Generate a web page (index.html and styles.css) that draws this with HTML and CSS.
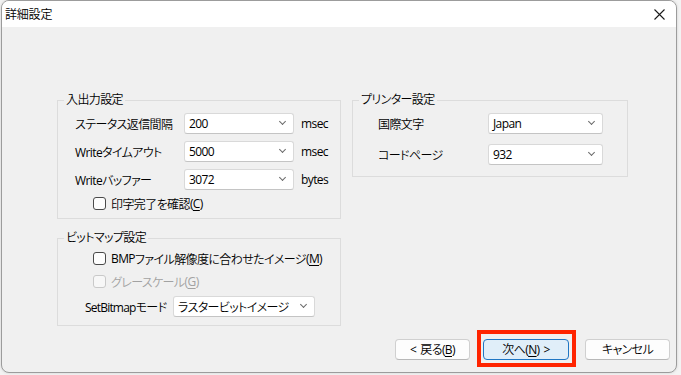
FILE: index.html
```html
<!DOCTYPE html>
<html lang="ja">
<head>
<meta charset="utf-8">
<title>詳細設定</title>
<link rel="stylesheet" href="styles.css">
</head>
<body>
<div class="window">
  <div class="titlebar">
    <span class="title">詳細設定</span>
    <span class="close" aria-label="閉じる">
      <svg width="11" height="11" viewBox="0 0 11 11"><path d="M0.5 0.5 L10.5 10.5 M10.5 0.5 L0.5 10.5" stroke="#1a1a1a" stroke-width="1.1" fill="none"/></svg>
    </span>
  </div>
  <div class="client">
    <div class="groups">
      <div class="col-left">
        <div class="group g-io">
          <span class="group-title">入出力設定</span>
          <div class="row">
            <span class="lbl w-io">ステータス返信間隔</span>
            <div class="combo w-110"><span class="en">200</span><i class="chev"></i></div>
            <span class="unit en">msec</span>
          </div>
          <div class="row">
            <span class="lbl w-io"><span class="en">Write</span>タイムアウト</span>
            <div class="combo w-110"><span class="en">5000</span><i class="chev"></i></div>
            <span class="unit en">msec</span>
          </div>
          <div class="row">
            <span class="lbl w-io"><span class="en">Write</span>バッファー</span>
            <div class="combo w-110"><span class="en">3072</span><i class="chev"></i></div>
            <span class="unit en">bytes</span>
          </div>
          <label class="check c-io"><span class="box"></span>印字完了を確認<span class="en">(<u>C</u>)</span></label>
        </div>
        <div class="group g-bmp">
          <span class="group-title">ビットマップ設定</span>
          <label class="check c-bmp"><span class="box"></span><span class="en">BMP</span>ファイル解像度に合わせたイメージ<span class="en">(<u>M</u>)</span></label>
          <label class="check c-bmp disabled"><span class="box"></span>グレースケール<span class="en">(<u>G</u>)</span></label>
          <div class="row r-bmp">
            <span class="lbl w-bmp"><span class="en tight">SetBitmap</span>モード</span>
            <div class="combo w-142"><span>ラスタービットイメージ</span><i class="chev"></i></div>
          </div>
        </div>
      </div>
      <div class="group g-printer">
        <span class="group-title">プリンター設定</span>
        <div class="row">
          <span class="lbl w-pr">国際文字</span>
          <div class="combo w-115"><span class="en">Japan</span><i class="chev"></i></div>
        </div>
        <div class="row">
          <span class="lbl w-pr">コードページ</span>
          <div class="combo w-115"><span class="en">932</span><i class="chev"></i></div>
        </div>
      </div>
    </div>
    <div class="buttons">
      <button class="btn b-back"><span class="en sp-r">&lt;</span>戻る<span class="en">(<u>B</u>)</span></button>
      <div class="hl-wrap">
        <button class="btn b-next default">次へ<span class="en">(<u>N</u>)</span><span class="en sp-l">&gt;</span></button>
        <span class="highlight"></span>
      </div>
      <button class="btn b-cancel">キャンセル</button>
    </div>
  </div>
</div>
</body>
</html>
```

FILE: styles.css
```css
* { box-sizing: border-box; }
html, body {
  margin: 0;
  padding: 0;
  background: #f3f3f3;
}
body {
  width: 681px;
  height: 375px;
  padding: 0 4px 1px 1px;
  font-family: "Open Sans", "Noto Sans CJK JP", sans-serif;
  font-size: 12px;
  font-weight: 350;
  font-feature-settings: "palt";
  letter-spacing: -0.6px;
  color: #000;
  overflow: hidden;
}
.en { font-weight: 400; }
.tight { letter-spacing: -0.8px; }
.sp-r { margin-right: 4px; }
.sp-l { margin-left: 4px; }
.window {
  width: 676px;
  height: 373px;
  border: 1px solid #9c9c9c;
  border-radius: 8px;
  overflow: hidden;
  display: flex;
  flex-direction: column;
  background: #f0f0f0;
  box-shadow: 0 0 3px rgba(0,0,0,0.15);
}
.titlebar {
  height: 26px;
  flex: none;
  background: #ffffff;
  display: flex;
  align-items: center;
  justify-content: space-between;
  padding: 0 6px 0 3px;
}
.title { font-size: 12px; letter-spacing: -0.2px; }
.close { display: flex; width: 11px; height: 11px; margin-right: 5px; }
.client {
  flex: 1;
  display: flex;
  flex-direction: column;
  padding: 73px 0 0 55px;
}
.groups {
  display: flex;
  gap: 11px;
  align-items: flex-start;
}
.col-left {
  display: flex;
  flex-direction: column;
  gap: 19px;
}
.group {
  position: relative;
  border: 1px solid #dcdcdc;
  display: flex;
  flex-direction: column;
}
.group-title {
  position: absolute;
  top: -10px;
  left: 6px;
  padding: 0 2px;
  background: #f0f0f0;
  line-height: 18px;
}
.g-io {
  width: 284px;
  height: 119px;
  padding: 12px 0 0 17px;
  gap: 7px;
}
.g-bmp {
  width: 284px;
  height: 88px;
  padding: 13px 0 0 0;
}
.g-printer {
  width: 276px;
  height: 77px;
  padding: 12px 0 0 25px;
  gap: 10px;
}
.row {
  display: flex;
  align-items: center;
  height: 21px;
}
.lbl { white-space: nowrap; }
.w-io { width: 109px; }
.w-pr { width: 110px; }
.w-bmp { width: 88px; }
.r-bmp { padding-left: 27px; }
.unit { margin-left: 7px; }
.combo {
  height: 21px;
  background: #fff;
  border: 1px solid #d9d9d9;
  border-bottom-color: #c4c4c4;
  border-radius: 3px;
  display: flex;
  align-items: center;
  justify-content: space-between;
  padding: 0 8px 0 4px;
  white-space: nowrap;
}
.w-110 { width: 110px; }
.w-115 { width: 115px; }
.w-142 { width: 142px; }
.chev {
  width: 5px;
  height: 5px;
  border-right: 1px solid #6a6a6a;
  border-bottom: 1px solid #6a6a6a;
  transform: rotate(45deg);
  margin-top: -4px;
}
.check {
  display: flex;
  align-items: center;
  height: 13px;
  white-space: nowrap;
}
.check .box {
  width: 13px;
  height: 13px;
  border: 1px solid #4a4a4a;
  border-radius: 3px;
  background: #fdfdfd;
  margin-right: 5px;
  flex: none;
}
.c-io { margin-left: 18px; }
.c-bmp { margin-left: 35px; margin-bottom: 10px; }
.c-bmp.disabled { margin-bottom: 8px; }
.check.disabled { color: #a2a2a2; }
.check.disabled .box { border-color: #c9c9c9; background: #f7f7f7; }
u { text-decoration-thickness: 1px; text-underline-offset: 2px; }
.buttons {
  display: flex;
  justify-content: flex-end;
  align-items: center;
  padding: 0 6px 0 0;
  margin-top: 13px;
}
.btn {
  font-family: inherit;
  font-size: 12px;
  font-weight: 350;
  font-feature-settings: "palt";
  letter-spacing: -0.6px;
  height: 21px;
  background: #fdfdfd;
  border: 1px solid #d0d0d0;
  border-bottom-color: #b8b8b8;
  border-radius: 4px;
  color: #000;
  padding: 0;
  line-height: 18px;
}
.b-back { width: 75px; }
.b-next { width: 86px; }
.b-cancel { width: 85px; margin-left: 16px; }
.hl-wrap { position: relative; margin-left: 13px; display: flex; }
.b-next.default {
  background: #e0eef9;
  border: 1px solid #1f76c4;
}
.highlight {
  position: absolute;
  left: -6px;
  right: -7px;
  top: -9px;
  bottom: -7px;
  border: 4px solid #ff2400;
  pointer-events: none;
}
```
